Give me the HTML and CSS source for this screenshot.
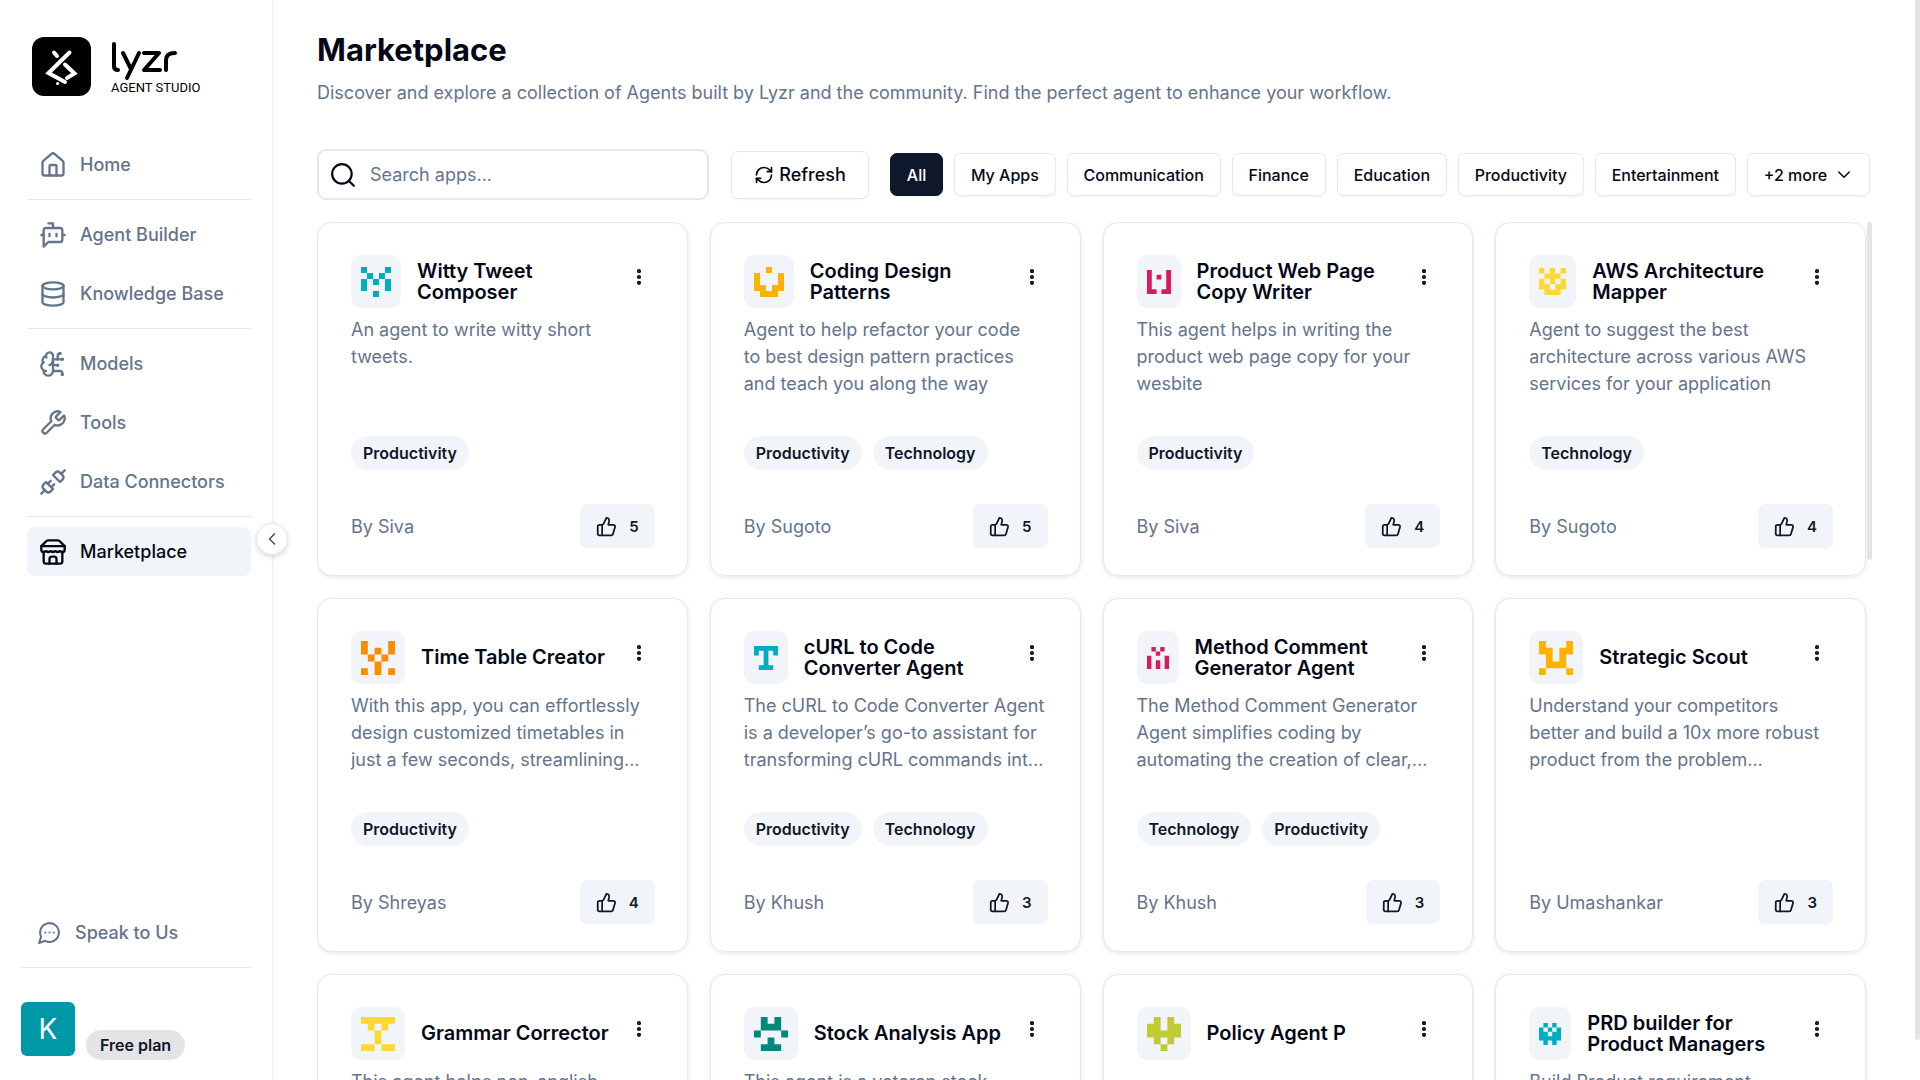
FILE: index.html
```
<!DOCTYPE html>
<html lang="en">
<head>
  <meta charset="UTF-8">
  <meta name="viewport" content="width=device-width, initial-scale=1.0">
  <title>Marketplace - Lyzr Agent Studio</title>
  <link rel="stylesheet" href="styles.css">
</head>
<body>
  <!-- Shared icons -->
  <svg class="sprite" aria-hidden="true">
    <symbol id="i-dots" viewBox="0 0 24 24"><circle cx="12" cy="12" r="1"/><circle cx="12" cy="5" r="1"/><circle cx="12" cy="19" r="1"/></symbol>
    <symbol id="i-like" viewBox="0 0 24 24"><path d="M7 10v12"/><path d="M15 5.88 14 10h5.83a2 2 0 0 1 1.92 2.56l-2.33 8A2 2 0 0 1 17.5 22H4a2 2 0 0 1-2-2v-8a2 2 0 0 1 2-2h2.76a2 2 0 0 0 1.79-1.11L12 2a3.13 3.13 0 0 1 3 3.88Z"/></symbol>
  </svg>

  <div class="layout">
    <aside class="sidebar">
      <div class="brand">
        <svg class="brand-logo" viewBox="0 0 59 59">
          <rect width="59" height="59" rx="12" fill="#000"/>
          <g fill="none" stroke="#fff" stroke-width="4" stroke-linecap="round" stroke-linejoin="miter">
            <path d="M37.500 15.500 16.500 36 33 45"/>
            <path d="M22 15.500 25 19"/>
            <path d="M33 27.500 42.500 36.500 35 41"/>
            <path d="M25.500 46.500h.1" stroke-width="3"/>
          </g>
        </svg>
        <div class="brand-text">
          <svg class="brand-word" viewBox="0 0 66 40" role="img" aria-label="lyzr">
            <g fill="none" stroke="#000" stroke-width="4" stroke-linecap="round" stroke-linejoin="round">
              <path d="M3 3v22q0 4 4 4"/>
              <path d="M12 12l8 16M28 12 16 37"/>
              <path d="M33 12h15L33 29h16"/>
              <path d="M55 29V19q0-7 9-7"/>
            </g>
          </svg>
          <span class="brand-sub">AGENT STUDIO</span>
        </div>
      </div>

      <nav class="nav">
        <a href="#" class="nav-item">
          <svg class="icon" viewBox="0 0 24 24"><path d="M15 21v-8a1 1 0 0 0-1-1h-4a1 1 0 0 0-1 1v8"/><path d="M3 10a2 2 0 0 1 .709-1.528l7-5.999a2 2 0 0 1 2.582 0l7 5.999A2 2 0 0 1 21 10v9a2 2 0 0 1-2 2H5a2 2 0 0 1-2-2z"/></svg>
          Home
        </a>
        <hr>
        <a href="#" class="nav-item">
          <svg class="icon" viewBox="0 0 24 24"><path d="M12 6V2H8"/><path d="m8 18-4 4V8a2 2 0 0 1 2-2h12a2 2 0 0 1 2 2v8a2 2 0 0 1-2 2Z"/><path d="M2 12h2"/><path d="M9 11v2"/><path d="M15 11v2"/><path d="M20 12h2"/></svg>
          Agent Builder
        </a>
        <a href="#" class="nav-item">
          <svg class="icon" viewBox="0 0 24 24"><ellipse cx="12" cy="5" rx="9" ry="3"/><path d="M3 5v14a9 3 0 0 0 18 0V5"/><path d="M3 12a9 3 0 0 0 18 0"/></svg>
          Knowledge Base
        </a>
        <hr>
        <a href="#" class="nav-item">
          <svg class="icon" viewBox="0 0 24 24"><path d="M12 5a3 3 0 1 0-5.997.125 4 4 0 0 0-2.526 5.770 4 4 0 0 0 .556 6.588A4 4 0 1 0 12 18Z"/><path d="M9 13a4.500 4.500 0 0 0 3-4"/><path d="M6.003 5.125A3 3 0 0 0 6.401 6.500"/><path d="M3.477 10.896a4 4 0 0 1 .585-.396"/><path d="M6 18a4 4 0 0 1-1.967-.516"/><path d="M12 13h4"/><path d="M12 18h6a2 2 0 0 1 2 2v1"/><path d="M12 8h8"/><path d="M16 8V5a2 2 0 0 1 2-2"/><circle cx="16" cy="13" r=".5"/><circle cx="18" cy="3" r=".5"/><circle cx="20" cy="21" r=".5"/><circle cx="20" cy="8" r=".5"/></svg>
          Models
        </a>
        <a href="#" class="nav-item">
          <svg class="icon" viewBox="0 0 24 24"><path d="M14.700 6.300a1 1 0 0 0 0 1.400l1.600 1.600a1 1 0 0 0 1.400 0l3.770-3.770a6 6 0 0 1-7.940 7.940l-6.910 6.910a2.120 2.120 0 0 1-3-3l6.910-6.910a6 6 0 0 1 7.940-7.940l-3.760 3.760z"/></svg>
          Tools
        </a>
        <a href="#" class="nav-item">
          <svg class="icon" viewBox="0 0 24 24"><path d="m19 5 3-3"/><path d="m2 22 3-3"/><path d="M6.300 20.300a2.400 2.400 0 0 0 3.400 0L12 18l-6-6-2.300 2.300a2.400 2.400 0 0 0 0 3.400Z"/><path d="M7.500 13.500 10 11"/><path d="M10.500 16.500 13 14"/><path d="m12 6 6 6 2.300-2.300a2.400 2.400 0 0 0 0-3.400l-2.600-2.600a2.400 2.400 0 0 0-3.400 0Z"/></svg>
          Data Connectors
        </a>
        <hr>
        <a href="#" class="nav-item active">
          <svg class="icon" viewBox="0 0 24 24"><path d="m2 7 4.410-4.410A2 2 0 0 1 7.830 2h8.340a2 2 0 0 1 1.420.59L22 7"/><path d="M4 12v8a2 2 0 0 0 2 2h12a2 2 0 0 0 2-2v-8"/><path d="M15 22v-4a2 2 0 0 0-2-2h-2a2 2 0 0 0-2 2v4"/><path d="M2 7h20"/><path d="M22 7v3a2 2 0 0 1-2 2a2.700 2.700 0 0 1-1.590-.63.700.700 0 0 0-.82 0A2.700 2.700 0 0 1 16 12a2.700 2.700 0 0 1-1.590-.63.700.700 0 0 0-.82 0A2.700 2.700 0 0 1 12 12a2.700 2.700 0 0 1-1.590-.63.700.700 0 0 0-.82 0A2.700 2.700 0 0 1 8 12a2.700 2.700 0 0 1-1.590-.63.700.700 0 0 0-.82 0A2.700 2.700 0 0 1 4 12a2 2 0 0 1-2-2V7"/></svg>
          Marketplace
        </a>
      </nav>

      <div class="sidebar-bottom">
        <a href="#" class="speak">
          <svg class="icon" viewBox="0 0 24 24"><path d="M7.900 20A9 9 0 1 0 4 16.100L2 22Z"/><path d="M8 12h.01"/><path d="M12 12h.01"/><path d="M16 12h.01"/></svg>
          Speak to Us
        </a>
        <hr>
        <div class="account">
          <div class="avatar">K</div>
          <span class="plan">Free plan</span>
        </div>
      </div>

      <button class="collapse" aria-label="Collapse sidebar">
        <svg class="icon" viewBox="0 0 24 24"><path d="m15 18-6-6 6-6"/></svg>
      </button>
    </aside>

    <main class="main">
      <h1>Marketplace</h1>
      <p class="subtitle">Discover and explore a collection of Agents built by Lyzr and the community. Find the perfect agent to enhance your workflow.</p>

      <div class="toolbar">
        <label class="search">
          <svg class="icon" viewBox="0 0 24 24"><circle cx="11" cy="11" r="9"/><path d="m22 22-4.500-4.500"/></svg>
          <input type="text" placeholder="Search apps..." aria-label="Search apps">
        </label>
        <button class="refresh">
          <svg class="icon" viewBox="0 0 24 24"><path d="M3 12a9 9 0 0 1 9-9 9.750 9.750 0 0 1 6.740 2.740L21 8"/><path d="M21 3v5h-5"/><path d="M21 12a9 9 0 0 1-9 9 9.750 9.750 0 0 1-6.740-2.740L3 16"/><path d="M8 16H3v5"/></svg>
          Refresh
        </button>
        <div class="filters">
          <button class="filter selected">All</button>
          <button class="filter">My Apps</button>
          <button class="filter">Communication</button>
          <button class="filter">Finance</button>
          <button class="filter">Education</button>
          <button class="filter">Productivity</button>
          <button class="filter">Entertainment</button>
          <button class="filter">+2 more <svg class="icon" viewBox="0 0 24 24"><path d="m5 8 7 7 7-7"/></svg></button>
        </div>
      </div>

      <div class="scroller">
        <div class="grid">

          <article class="card">
            <header class="card-head">
              <div class="tile tile-lg"><svg viewBox="0 0 5 5" fill="#00acc1"><path d="M0 0h1v1h-1zM4 0h1v1h-1zM1 1h1v1h-1zM3 1h1v1h-1zM0 2h1v2h-1zM2 2h1v1h-1zM4 2h1v2h-1zM2 4h1v1h-1z"/></svg></div>
              <h2>Witty Tweet<br>Composer</h2>
              <button class="more" aria-label="More options"><svg class="icon"><use href="#i-dots"/></svg></button>
            </header>
            <p class="desc">An agent to write witty short<br>tweets.</p>
            <div class="tags"><span class="tag">Productivity</span></div>
            <footer class="card-foot"><span>By Siva</span><button class="like"><svg class="icon"><use href="#i-like"/></svg>5</button></footer>
          </article>

          <article class="card">
            <header class="card-head">
              <div class="tile tile-lg"><svg viewBox="0 0 5 5" fill="#ffb300"><path d="M2 0h1v1h-1zM0 1h1v2h1v1h1v1h-2v-1h-1zM4 1h1v3h-1v1h-2v-1h1v-1h1z"/></svg></div>
              <h2>Coding Design<br>Patterns</h2>
              <button class="more" aria-label="More options"><svg class="icon"><use href="#i-dots"/></svg></button>
            </header>
            <p class="desc">Agent to help refactor your code<br>to best design pattern practices<br>and teach you along the way</p>
            <div class="tags"><span class="tag">Productivity</span><span class="tag">Technology</span></div>
            <footer class="card-foot"><span>By Sugoto</span><button class="like"><svg class="icon"><use href="#i-like"/></svg>5</button></footer>
          </article>

          <article class="card">
            <header class="card-head">
              <div class="tile tile-sm"><svg viewBox="0 0 5 5" fill="#d81b60"><path d="M0 0h1v4h1v1h-2zM2 1h1v1h-1zM4 0h1v5h-2v-1h1z"/></svg></div>
              <h2>Product Web Page<br>Copy Writer</h2>
              <button class="more" aria-label="More options"><svg class="icon"><use href="#i-dots"/></svg></button>
            </header>
            <p class="desc">This agent helps in writing the<br>product web page copy for your<br>wesbite</p>
            <div class="tags"><span class="tag">Productivity</span></div>
            <footer class="card-foot"><span>By Siva</span><button class="like"><svg class="icon"><use href="#i-like"/></svg>4</button></footer>
          </article>

          <article class="card">
            <header class="card-head">
              <div class="tile tile-md"><svg viewBox="0 0 5 5" fill="#fdd835"><path d="M0 0h1v1h-1zM2 0h1v1h-1zM4 0h1v1h-1zM1 1h3v1h-3zM0 2h1v1h-1zM2 2h1v1h-1zM4 2h1v1h-1zM0 3h2v1h-2zM3 3h2v1h-2zM1 4h3v1h-3z"/></svg></div>
              <h2>AWS Architecture<br>Mapper</h2>
              <button class="more" aria-label="More options"><svg class="icon"><use href="#i-dots"/></svg></button>
            </header>
            <p class="desc">Agent to suggest the best<br>architecture across various AWS<br>services for your application</p>
            <div class="tags"><span class="tag">Technology</span></div>
            <footer class="card-foot"><span>By Sugoto</span><button class="like"><svg class="icon"><use href="#i-like"/></svg>4</button></footer>
          </article>

          <article class="card">
            <header class="card-head">
              <div class="tile"><svg viewBox="0 0 5 5" fill="#fb8c00"><path d="M0 0h1v2h-1zM4 0h1v2h-1zM2 1h1v1h-1zM1 2h1v1h-1zM3 2h1v1h-1zM2 3h1v2h-1zM0 4h1v1h-1zM4 4h1v1h-1z"/></svg></div>
              <h2>Time Table Creator</h2>
              <button class="more" aria-label="More options"><svg class="icon"><use href="#i-dots"/></svg></button>
            </header>
            <p class="desc">With this app, you can effortlessly<br>design customized timetables in<br>just a few seconds, streamlining...</p>
            <div class="tags"><span class="tag">Productivity</span></div>
            <footer class="card-foot"><span>By Shreyas</span><button class="like"><svg class="icon"><use href="#i-like"/></svg>4</button></footer>
          </article>

          <article class="card">
            <header class="card-head">
              <div class="tile tile-sm"><svg viewBox="0 0 5 5" fill="#00acc1"><path d="M0 0h5v2h-1v-1h-1v3h1v1h-3v-1h1v-3h-1v1h-1z"/></svg></div>
              <h2>cURL to Code<br>Converter Agent</h2>
              <button class="more" aria-label="More options"><svg class="icon"><use href="#i-dots"/></svg></button>
            </header>
            <p class="desc">The cURL to Code Converter Agent<br>is a developer’s go-to assistant for<br>transforming cURL commands int...</p>
            <div class="tags"><span class="tag">Productivity</span><span class="tag">Technology</span></div>
            <footer class="card-foot"><span>By Khush</span><button class="like"><svg class="icon"><use href="#i-like"/></svg>3</button></footer>
          </article>

          <article class="card">
            <header class="card-head">
              <div class="tile tile-xs"><svg viewBox="0 0 5 5" fill="#d81b60"><path d="M1 0h1v1h-1zM3 0h1v1h-1zM2 1h1v1h-1zM0 2h1v3h-1zM4 2h1v3h-1zM2 3h1v2h-1z"/></svg></div>
              <h2>Method Comment<br>Generator Agent</h2>
              <button class="more" aria-label="More options"><svg class="icon"><use href="#i-dots"/></svg></button>
            </header>
            <p class="desc">The Method Comment Generator<br>Agent simplifies coding by<br>automating the creation of clear,...</p>
            <div class="tags"><span class="tag">Technology</span><span class="tag">Productivity</span></div>
            <footer class="card-foot"><span>By Khush</span><button class="like"><svg class="icon"><use href="#i-like"/></svg>3</button></footer>
          </article>

          <article class="card">
            <header class="card-head">
              <div class="tile"><svg viewBox="0 0 5 5" fill="#ffb300"><path d="M0 0h1v1h1v2h1v-2h1v-1h1v2h-1v2h-3v-2h-1zM0 4h1v1h-1zM4 4h1v1h-1z"/></svg></div>
              <h2>Strategic Scout</h2>
              <button class="more" aria-label="More options"><svg class="icon"><use href="#i-dots"/></svg></button>
            </header>
            <p class="desc">Understand your competitors<br>better and build a 10x more robust<br>product from the problem...</p>
            <div class="tags"></div>
            <footer class="card-foot"><span>By Umashankar</span><button class="like"><svg class="icon"><use href="#i-like"/></svg>3</button></footer>
          </article>

          <article class="card">
            <header class="card-head">
              <div class="tile"><svg viewBox="0 0 5 5" fill="#fdd835"><path d="M0 0h5v1h-5zM1 1h1v1h-1zM3 1h1v1h-1zM2 2h1v2h-1zM0 4h2v1h-2zM3 4h2v1h-2z"/></svg></div>
              <h2>Grammar Corrector</h2>
              <button class="more" aria-label="More options"><svg class="icon"><use href="#i-dots"/></svg></button>
            </header>
            <p class="desc">This agent helps non-english</p>
          </article>

          <article class="card">
            <header class="card-head">
              <div class="tile"><svg viewBox="0 0 5 5" fill="#00897b"><path d="M1 0h1v1h1v-1h1v2h-3zM0 2h1v1h-1zM4 2h1v1h-1zM2 3h1v1h1v1h-3v-1h1z"/></svg></div>
              <h2>Stock Analysis App</h2>
              <button class="more" aria-label="More options"><svg class="icon"><use href="#i-dots"/></svg></button>
            </header>
            <p class="desc">This agent is a veteran stock</p>
          </article>

          <article class="card">
            <header class="card-head">
              <div class="tile"><svg viewBox="0 0 5 5" fill="#c0ca33"><path d="M1 0h1v2h1v-2h1v1h1v2h-1v1h-1v-1h-1v1h-1v-1h-1v-2h1zM2 4h1v1h-1z"/></svg></div>
              <h2>Policy Agent P</h2>
              <button class="more" aria-label="More options"><svg class="icon"><use href="#i-dots"/></svg></button>
            </header>
          </article>

          <article class="card">
            <header class="card-head">
              <div class="tile tile-xs"><svg viewBox="0 0 5 5" fill="#00acc1"><path d="M1 0h1v1h-1zM3 0h1v1h-1zM0 1h1v1h-1zM2 1h1v1h-1zM4 1h1v1h-1zM0 2h2v1h-2zM3 2h2v1h-2zM0 3h5v1h-5zM1 4h1v1h-1zM3 4h1v1h-1z"/></svg></div>
              <h2>PRD builder for<br>Product Managers</h2>
              <button class="more" aria-label="More options"><svg class="icon"><use href="#i-dots"/></svg></button>
            </header>
            <p class="desc">Build Product requirement</p>
          </article>

        </div>
        <div class="grid-thumb"></div>
      </div>
      <div class="page-thumb"></div>
    </main>
  </div>
</body>
</html>
```
FILE: styles.css
```
* {
  box-sizing: border-box;
}

body {
  margin: 0;
  font-family: Inter, "Liberation Sans", sans-serif;
  color: #020817;
  background: #fff;
}

h1, h2, p {
  margin: 0;
}

button {
  font: inherit;
  color: inherit;
  cursor: pointer;
}

a {
  color: inherit;
  text-decoration: none;
}

hr {
  width: 100%;
  height: 1px;
  margin: 0;
  border: none;
  background: #e2e8f0;
}

.sprite {
  display: none;
}

.icon {
  flex: none;
  width: 28px;
  height: 28px;
  fill: none;
  stroke: currentColor;
  stroke-width: 2;
  stroke-linecap: round;
  stroke-linejoin: round;
}

.layout {
  display: flex;
  height: 100vh;
  overflow: hidden;
}

/* Sidebar */
.sidebar {
  position: relative;
  flex: none;
  display: flex;
  flex-direction: column;
  width: 274px;
  padding: 37px 21px 20px 27px;
  border-right: 2px solid #f1f5f9;
  color: #64748b;
}

.brand {
  display: flex;
  gap: 20px;
  padding-left: 5px;
  margin-bottom: 44px;
}

.brand-logo {
  width: 59px;
  height: 59px;
}

.brand-text {
  display: flex;
  flex-direction: column;
  padding-top: 4px;
}

.brand-word {
  width: 66px;
  height: 40px;
}

.brand-sub {
  font-family: Roboto, "Liberation Sans", sans-serif;
  font-size: 13px;
  line-height: 13px;
  color: #000;
  white-space: nowrap;
}

.nav {
  display: flex;
  flex-direction: column;
  gap: 10px;
}

.nav-item,
.speak {
  display: flex;
  align-items: center;
  gap: 13px;
  height: 49px;
  padding: 0 12px;
  border-radius: 8px;
  font-size: 18px;
  font-weight: 500;
  white-space: nowrap;
}

.nav-item.active {
  background: #f1f5f9;
  color: #020817;
}

.sidebar-bottom {
  margin-top: auto;
  margin-left: -6px;
}

.speak {
  margin-bottom: 10px;
}

.speak .icon {
  width: 25px;
  height: 25px;
}

.sidebar-bottom .speak {
  padding: 0 16px;
}

.account {
  display: flex;
  align-items: flex-end;
  gap: 11px;
  padding: 34px 0 0;
}

.avatar {
  width: 54px;
  height: 54px;
  margin-bottom: 4px;
  border-radius: 6px;
  background: #0097a7;
  color: #fff;
  font-size: 28px;
  line-height: 54px;
  text-align: center;
}

.plan {
  padding: 0 14px;
  border-radius: 15px;
  background: #e4e4e7;
  color: #0f172a;
  font-size: 16px;
  font-weight: 600;
  line-height: 30px;
}

.collapse {
  position: absolute;
  top: calc(50% - 17px);
  right: -16px;
  display: flex;
  align-items: center;
  justify-content: center;
  width: 32px;
  height: 32px;
  padding: 0;
  border: 1px solid #e2e8f0;
  border-radius: 50%;
  background: #fff;
  color: #475569;
  box-shadow: 0 2px 5px rgba(0, 0, 0, 0.15);
}

.collapse .icon {
  width: 20px;
  height: 20px;
}

/* Main */
.main {
  position: relative;
  flex: 1;
  display: flex;
  flex-direction: column;
  min-width: 0;
  padding: 28px 48px 0 43px;
}

h1 {
  font-size: 31px;
  font-weight: 700;
  line-height: 44px;
}

.subtitle {
  margin-top: 7px;
  color: #64748b;
  font-size: 18px;
  line-height: 28px;
}

.toolbar {
  display: flex;
  align-items: center;
  margin-top: 42px;
  margin-right: 2px;
}

.search {
  display: flex;
  align-items: center;
  flex: 0 1 392px;
  gap: 14px;
  height: 51px;
  margin-right: 22px;
  padding: 0 11px;
  border: 2px solid #e2e8f0;
  border-radius: 9px;
}

.search .icon {
  width: 26px;
  height: 26px;
}

.search input {
  flex: 1;
  min-width: 0;
  padding: 0;
  border: none;
  outline: none;
  background: none;
  font: inherit;
  font-size: 18px;
}

.search input::placeholder {
  color: #64748b;
  opacity: 1;
}

.refresh,
.filter {
  display: flex;
  align-items: center;
  justify-content: center;
  border: 1px solid #e2e8f0;
  border-radius: 7px;
  background: #fff;
  box-shadow: 0 1px 2px rgba(0, 0, 0, 0.05);
  font-weight: 500;
  white-space: nowrap;
}

.refresh {
  flex: none;
  gap: 5px;
  width: 138px;
  height: 48px;
  margin-right: 21px;
  padding: 0;
  font-size: 18px;
}

.refresh .icon {
  width: 20px;
  height: 20px;
}

.filters {
  display: flex;
  flex: 1;
  gap: 11px;
}

.filter {
  flex: 1 1 auto;
  gap: 8px;
  height: 43px;
  padding: 0 14px;
  font-size: 16px;
}

.filter .icon {
  width: 18px;
  height: 18px;
}

.filter.selected {
  border-color: #0f172a;
  background: #0f172a;
  color: #fff;
}

/* Cards */
.scroller {
  position: relative;
  flex: 1;
  min-height: 0;
  margin-top: 22px;
  padding-right: 6px;
  overflow: hidden;
}

.grid {
  display: grid;
  grid-template-columns: repeat(4, minmax(0, 1fr));
  grid-auto-rows: 354px;
  gap: 22px;
}

.card {
  display: flex;
  flex-direction: column;
  padding: 32px 32px 27px 33px;
  border: 1px solid #e2e8f0;
  border-radius: 15px;
  box-shadow: 0 1px 4px rgba(15, 23, 42, 0.12);
}

.card-head {
  display: flex;
  align-items: center;
  height: 53px;
}

.tile {
  flex: none;
  display: flex;
  align-items: center;
  justify-content: center;
  width: 54px;
  height: 53px;
  margin-right: 16px;
  border-radius: 10px;
  background: #f1f5f9;
}

.tile svg {
  width: 34px;
  height: 34px;
}

.tile-lg {
  width: 50px;
}

.tile-lg svg {
  width: 30px;
  height: 30px;
}

.tile-md {
  width: 47px;
}

.tile-md svg {
  width: 27px;
  height: 27px;
}

.tile-sm {
  width: 44px;
}

.tile-sm svg {
  width: 24px;
  height: 24px;
}

.tile-xs {
  width: 42px;
}

.tile-xs svg {
  width: 22px;
  height: 22px;
}

h2 {
  flex: 1;
  min-width: 0;
  font-size: 20px;
  font-weight: 600;
  line-height: 21px;
  white-space: nowrap;
}

.more {
  align-self: flex-start;
  width: 32px;
  height: 44px;
  padding: 0;
  border: none;
  background: none;
}

.more .icon {
  display: block;
  width: 20px;
  height: 20px;
  margin: 0 auto;
  stroke-width: 3;
}

.desc {
  height: 81px;
  margin-top: 8px;
  color: #64748b;
  font-size: 18px;
  line-height: 27px;
  white-space: nowrap;
}

.tags {
  display: flex;
  gap: 11px;
  height: 34px;
  margin-top: 39px;
}

.tag {
  padding: 0 12px;
  border-radius: 17px;
  background: #f1f5f9;
  color: #0f172a;
  font-size: 16px;
  font-weight: 600;
  line-height: 34px;
}

.card-foot {
  display: flex;
  align-items: center;
  justify-content: space-between;
  margin-top: auto;
  color: #64748b;
  font-size: 18px;
}

.like {
  display: flex;
  align-items: center;
  gap: 12px;
  height: 44px;
  padding: 0 16px;
  border: none;
  border-radius: 7px;
  background: #f1f5f9;
  color: #0f172a;
  font-size: 15px;
  font-weight: 600;
}

.like .icon {
  width: 21px;
  height: 21px;
}

/* Scroll thumbs sit over the content edge */
.grid-thumb {
  position: absolute;
  top: 0;
  right: 0;
  width: 5px;
  height: 338px;
  border-radius: 3px;
  background: #e4e4e7;
}

.page-thumb {
  position: absolute;
  top: 0;
  right: 0;
  width: 5px;
  height: 1040px;
  border-radius: 0 0 3px 3px;
  background: #e4e4e7;
}
```
